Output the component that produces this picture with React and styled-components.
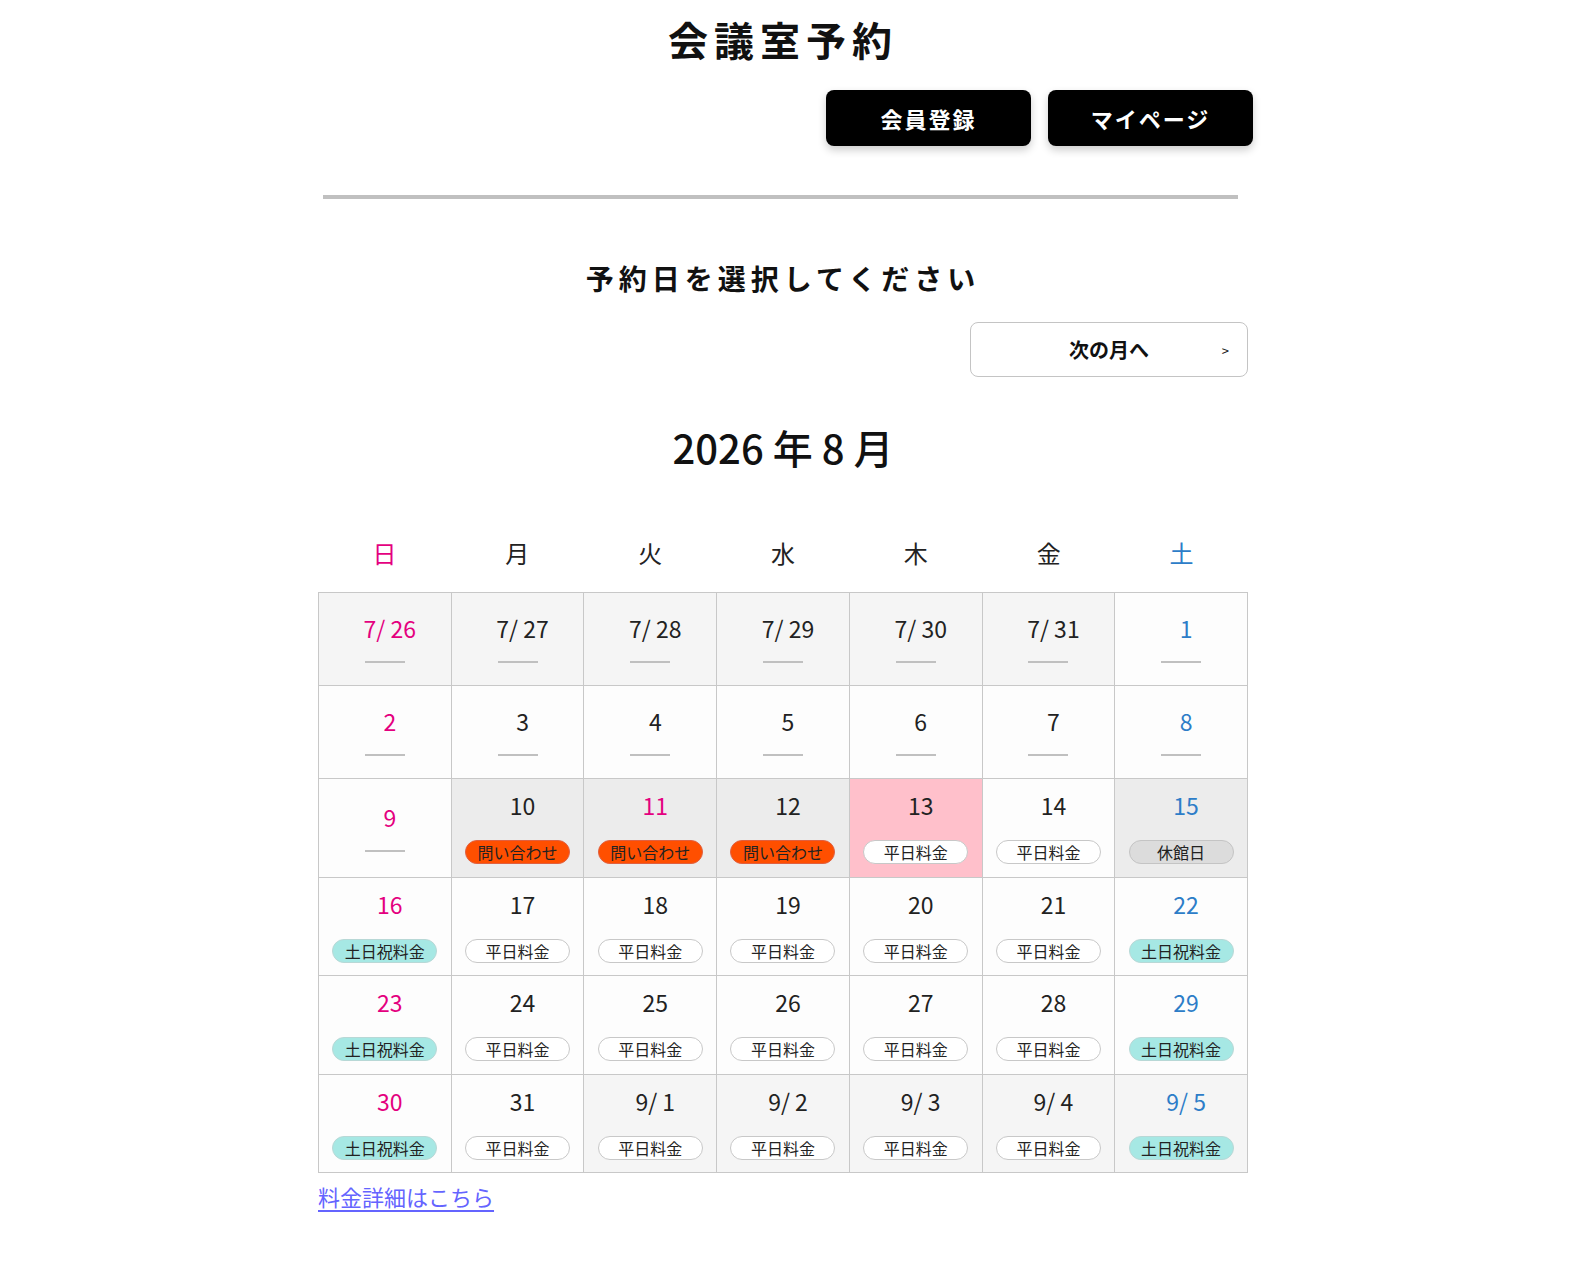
import React from 'react';
import styled, { createGlobalStyle } from 'styled-components';

const GlobalStyle = createGlobalStyle`
  body {
    margin: 0;
    background: #fff;
    font-family: 'Noto Sans CJK JP', 'Noto Sans', sans-serif;
    color: #111;
  }
`;

const WEEKDAYS = [
  { label: '日', tone: 'sun' },
  { label: '月' },
  { label: '火' },
  { label: '水' },
  { label: '木' },
  { label: '金' },
  { label: '土', tone: 'sat' },
];

// bg: out = previous/next month, closed = grey block, today = pink
const WEEKS = [
  [
    { day: '7/ 26', tone: 'sun', bg: 'out' },
    { day: '7/ 27', bg: 'out' },
    { day: '7/ 28', bg: 'out' },
    { day: '7/ 29', bg: 'out' },
    { day: '7/ 30', bg: 'out' },
    { day: '7/ 31', bg: 'out' },
    { day: '1', tone: 'sat' },
  ],
  [
    { day: '2', tone: 'sun' },
    { day: '3' },
    { day: '4' },
    { day: '5' },
    { day: '6' },
    { day: '7' },
    { day: '8', tone: 'sat' },
  ],
  [
    { day: '9', tone: 'sun' },
    { day: '10', bg: 'closed', badge: 'ask' },
    { day: '11', tone: 'sun', bg: 'closed', badge: 'ask' },
    { day: '12', bg: 'closed', badge: 'ask' },
    { day: '13', bg: 'today', badge: 'weekday' },
    { day: '14', badge: 'weekday' },
    { day: '15', tone: 'sat', bg: 'closed', badge: 'off' },
  ],
  [
    { day: '16', tone: 'sun', badge: 'holiday' },
    { day: '17', badge: 'weekday' },
    { day: '18', badge: 'weekday' },
    { day: '19', badge: 'weekday' },
    { day: '20', badge: 'weekday' },
    { day: '21', badge: 'weekday' },
    { day: '22', tone: 'sat', badge: 'holiday' },
  ],
  [
    { day: '23', tone: 'sun', badge: 'holiday' },
    { day: '24', badge: 'weekday' },
    { day: '25', badge: 'weekday' },
    { day: '26', badge: 'weekday' },
    { day: '27', badge: 'weekday' },
    { day: '28', badge: 'weekday' },
    { day: '29', tone: 'sat', badge: 'holiday' },
  ],
  [
    { day: '30', tone: 'sun', badge: 'holiday' },
    { day: '31', badge: 'weekday' },
    { day: '9/ 1', bg: 'out', badge: 'weekday' },
    { day: '9/ 2', bg: 'out', badge: 'weekday' },
    { day: '9/ 3', bg: 'out', badge: 'weekday' },
    { day: '9/ 4', bg: 'out', badge: 'weekday' },
    { day: '9/ 5', tone: 'sat', bg: 'out', badge: 'holiday' },
  ],
];

const BADGE_TEXT = {
  ask: '問い合わせ',
  weekday: '平日料金',
  holiday: '土日祝料金',
  off: '休館日',
};

function App() {
  return (
    <Page>
      <GlobalStyle />
      <Container>
        <Title>会議室予約</Title>
        <HeaderActions>
          <BlackButton>会員登録</BlackButton>
          <BlackButton>マイページ</BlackButton>
        </HeaderActions>
        <Divider />
        <SubTitle>予約日を選択してください</SubTitle>
        <NavRow>
          <NextButton>
            <span>次の月へ</span>
            <Arrow>&gt;</Arrow>
          </NextButton>
        </NavRow>
        <MonthTitle>2026 年 8 月</MonthTitle>
        <WeekHeader>
          {WEEKDAYS.map((w) => (
            <WeekLabel key={w.label} $tone={w.tone}>
              {w.label}
            </WeekLabel>
          ))}
        </WeekHeader>
        <Grid>
          {WEEKS.flat().map((c) => (
            <Cell key={c.day} $bg={c.bg}>
              <DayNum $tone={c.tone}>{c.day}</DayNum>
              {c.badge ? <Badge $kind={c.badge}>{BADGE_TEXT[c.badge]}</Badge> : <Dash />}
            </Cell>
          ))}
        </Grid>
        <PriceLink href='#'>料金詳細はこちら</PriceLink>
      </Container>
    </Page>
  );
}

export default App;

const toneColor = (tone) => (tone === 'sun' ? '#e4007f' : tone === 'sat' ? '#2d7dc8' : '#222');

const cellBg = {
  out: '#f5f5f5',
  closed: '#ececec',
  today: '#ffc0cb',
};

const badgeStyles = {
  ask: 'background: #ff4f00; border-color: #e06040;',
  weekday: 'background: #fff; border-color: #c8c8c8;',
  holiday: 'background: #a6e8e4; border-color: #b8d8d6;',
  off: 'background: #dcdcdc; border-color: #c4c4c4;',
};

const Page = styled.div`
  display: flex;
  justify-content: center;
  padding-right: 22px;
  padding-bottom: 40px;
`;

const Container = styled.div`
  width: 930px;
  display: flex;
  flex-direction: column;
`;

const Title = styled.h1`
  margin: 15px 0 0;
  text-align: center;
  font-size: 40px;
  line-height: 48px;
  font-weight: 700;
  letter-spacing: 6px;
`;

const HeaderActions = styled.div`
  display: flex;
  justify-content: flex-end;
  gap: 17px;
  margin: 27px -5px 0 0;
`;

const BlackButton = styled.button`
  width: 205px;
  height: 56px;
  border: none;
  border-radius: 8px;
  background: #000;
  color: #fff;
  font-family: inherit;
  font-size: 22px;
  font-weight: 700;
  letter-spacing: 2px;
  box-shadow: 0 4px 8px rgba(0, 0, 0, 0.2);
  cursor: pointer;
`;

const Divider = styled.div`
  height: 4px;
  background: #c0c0c0;
  margin: 49px 10px 0 5px;
`;

const SubTitle = styled.h2`
  margin: 59px 0 0;
  text-align: center;
  font-size: 28px;
  line-height: 40px;
  font-weight: 700;
  letter-spacing: 5px;
`;

const NavRow = styled.div`
  display: flex;
  justify-content: flex-end;
  margin-top: 24px;
`;

const NextButton = styled.button`
  position: relative;
  width: 278px;
  height: 55px;
  background: #fff;
  border: 1px solid #c4c4c4;
  border-radius: 8px;
  font-family: inherit;
  font-size: 20px;
  font-weight: 700;
  color: #111;
  cursor: pointer;
`;

const Arrow = styled.span`
  position: absolute;
  right: 18px;
  top: 50%;
  transform: translateY(-50%);
  font-size: 13px;
  font-weight: 400;
`;

const MonthTitle = styled.h2`
  margin: 45px 0 0;
  text-align: center;
  font-size: 40px;
  line-height: 50px;
  font-weight: 500;
`;

const WeekHeader = styled.div`
  display: grid;
  grid-template-columns: repeat(7, 1fr);
  margin-top: 40px;
  height: 80px;
  align-items: center;
`;

const WeekLabel = styled.div`
  text-align: center;
  font-size: 24px;
  color: ${({ $tone }) => toneColor($tone)};
`;

const Grid = styled.div`
  display: grid;
  grid-template-columns: repeat(7, 1fr);
  border-top: 1px solid #c8c8c8;
  border-left: 1px solid #c8c8c8;
`;

const Cell = styled.div`
  display: flex;
  flex-direction: column;
  align-items: center;
  justify-content: center;
  min-height: 93px;
  padding: 10px 0 12.5px;
  box-sizing: border-box;
  border-right: 1px solid #c8c8c8;
  border-bottom: 1px solid #c8c8c8;
  background: ${({ $bg }) => cellBg[$bg] || '#fdfdfd'};
`;

const DayNum = styled.div`
  font-size: 23px;
  line-height: 32px;
  padding-left: 10px;
  color: ${({ $tone }) => toneColor($tone)};
`;

const Dash = styled.div`
  width: 40px;
  height: 2px;
  margin-top: 17px;
  background: #c0c0c0;
`;

const Badge = styled.div`
  margin-top: 19px;
  width: 105px;
  height: 24px;
  box-sizing: border-box;
  border: 1px solid;
  border-radius: 12px;
  display: flex;
  align-items: center;
  justify-content: center;
  font-size: 16px;
  color: #222;
  ${({ $kind }) => badgeStyles[$kind]}
`;

const PriceLink = styled.a`
  align-self: flex-start;
  margin-top: 7px;
  font-size: 22px;
  line-height: 32px;
  color: #6464ff;
  text-decoration: underline;
  text-underline-offset: 4px;
`;
